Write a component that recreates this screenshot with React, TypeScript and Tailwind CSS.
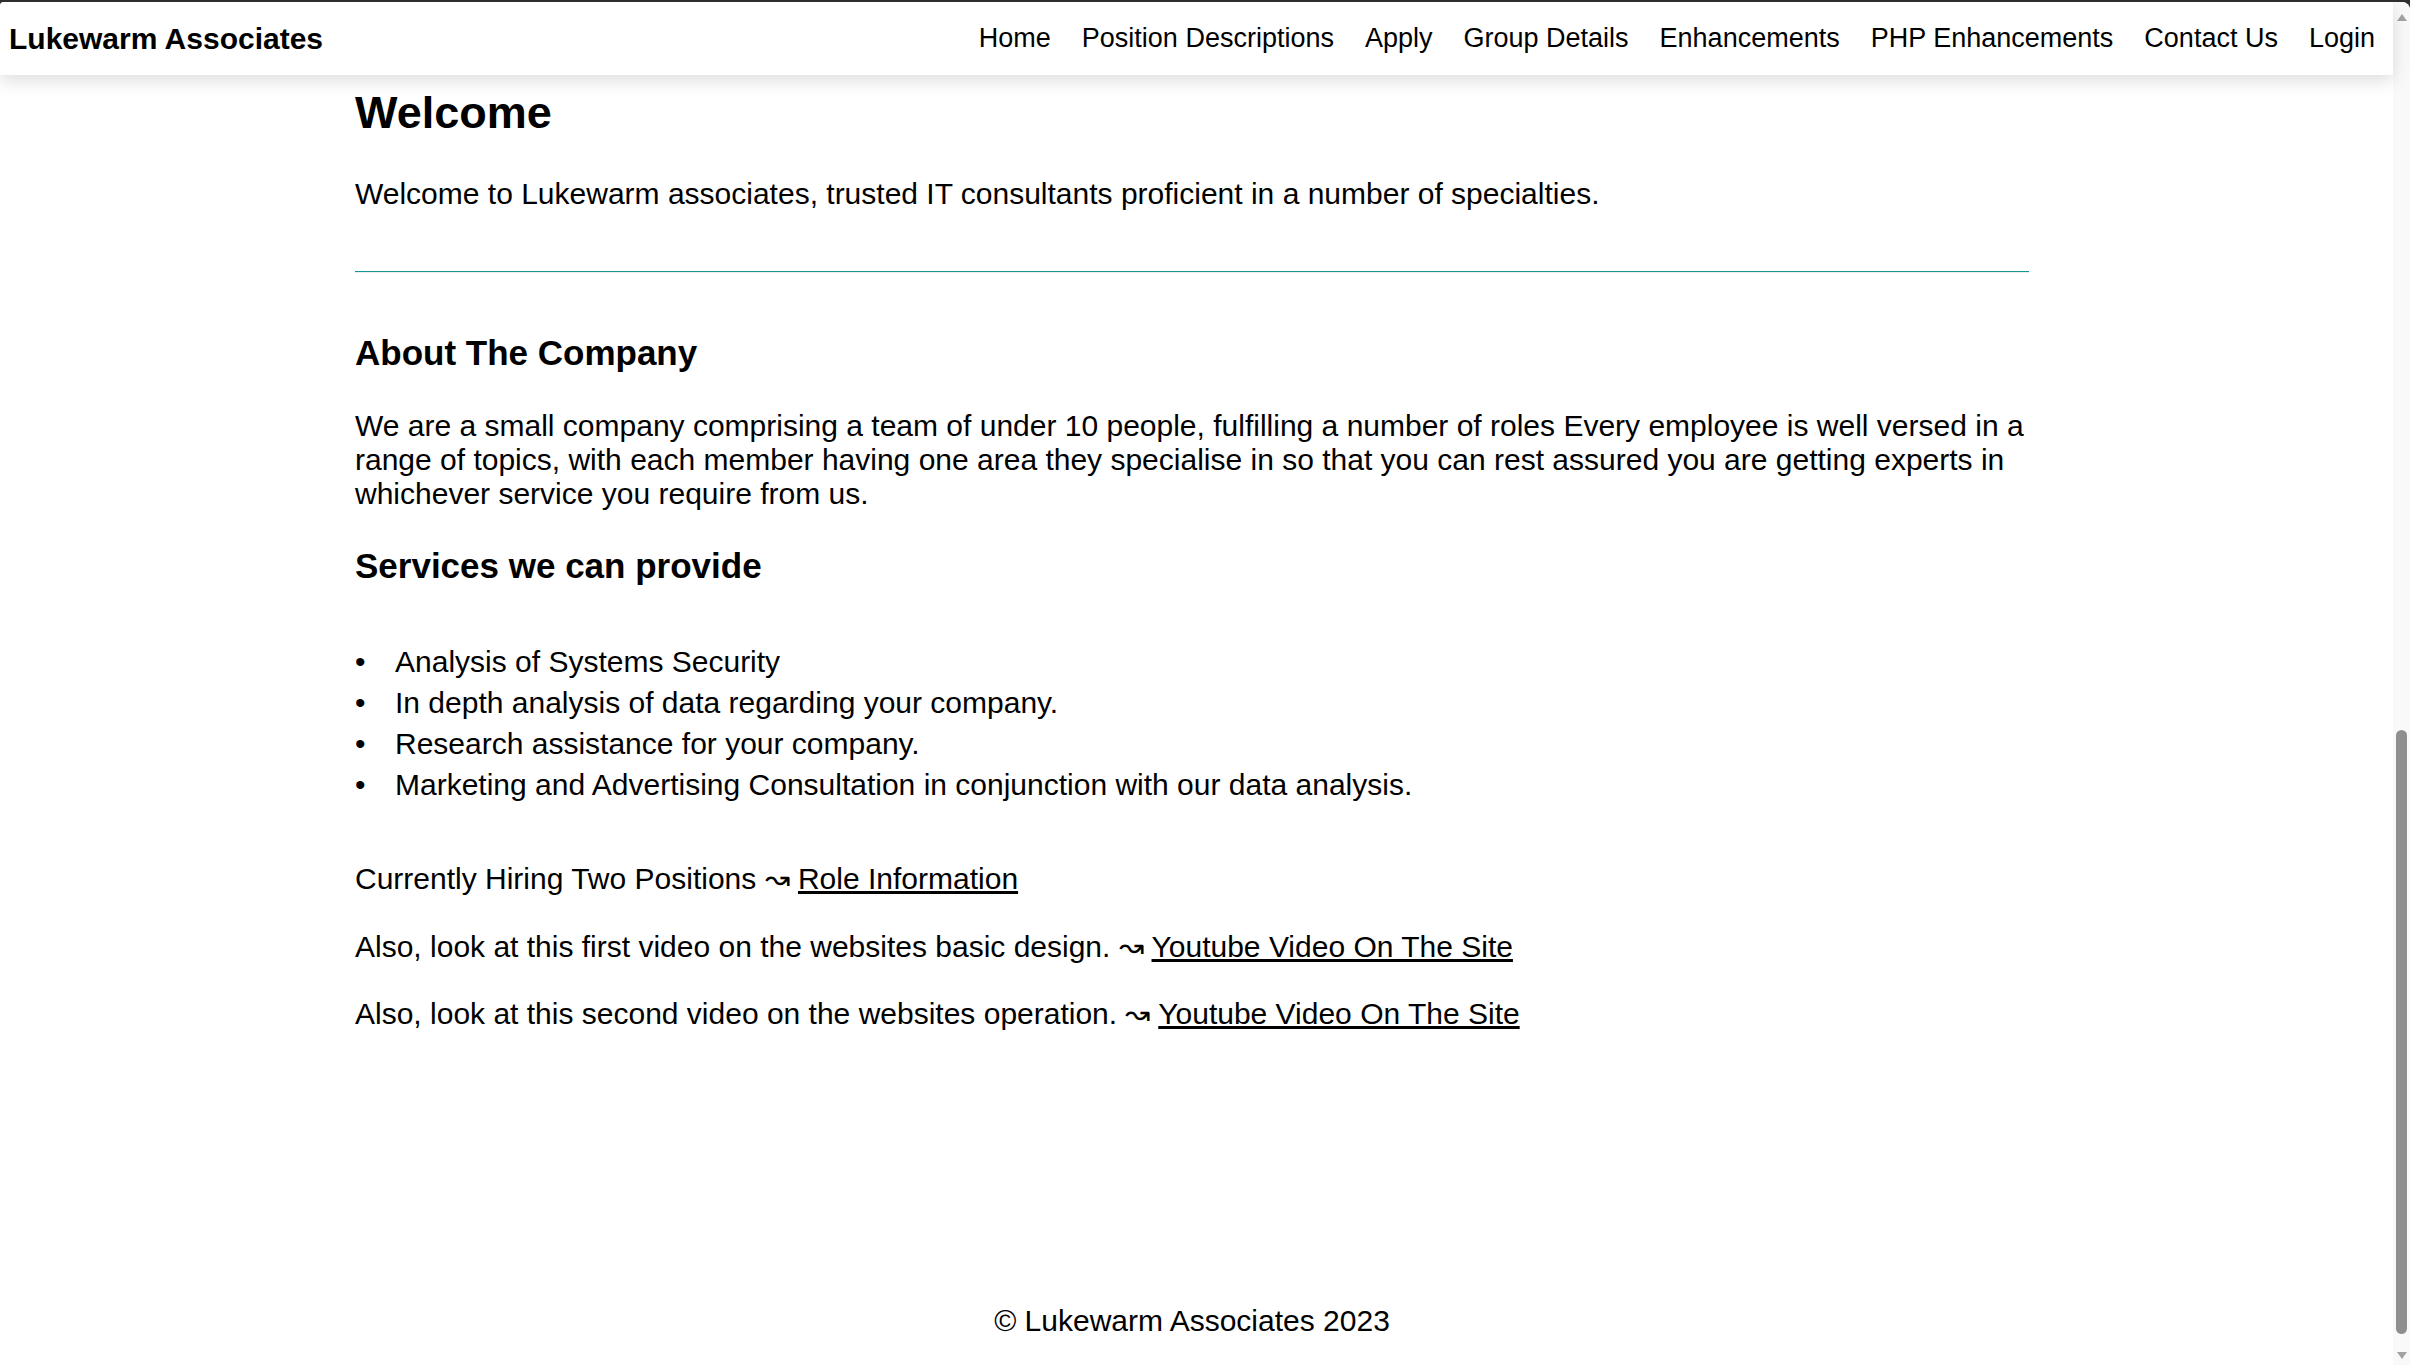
import React from "react";

const links = [
	"Home",
	"Position Descriptions",
	"Apply",
	"Group Details",
	"Enhancements",
	"PHP Enhancements",
	"Contact Us",
	"Login",
];

const services = [
	"Analysis of Systems Security",
	"In depth analysis of data regarding your company.",
	"Research assistance for your company.",
	"Marketing and Advertising Consultation in conjunction with our data analysis.",
];

const Scrollbar = () => {
	return (
		<div className="flex w-[17px] flex-col bg-[#f9f9f9]">
			<div className="flex h-[19px] items-end justify-center">
				<svg width="10" height="7" viewBox="0 0 10 7">
					<path d="M5 0 L10 7 L0 7 Z" fill="#a3a3a3" />
				</svg>
			</div>
			<div className="flex flex-1 flex-col justify-end">
				<div className="mx-auto h-[604px] w-[11px] rounded-full bg-[#8f8f8f]" />
			</div>
			<div className="flex h-[31px] items-end justify-center pb-[6px]">
				<svg width="10" height="7" viewBox="0 0 10 7">
					<path d="M0 0 L10 0 L5 7 Z" fill="#a3a3a3" />
				</svg>
			</div>
		</div>
	);
};

const App = () => {
	return (
		<div className="flex h-screen bg-[#2e2e2e] pt-[2px] font-['Liberation_Sans',Arial,sans-serif] leading-[normal] text-black">
			<div className="flex flex-1 overflow-hidden rounded-tl-[4px] rounded-tr-[8px] bg-white">
				<div className="flex flex-1 flex-col">
					<nav className="relative z-10 flex h-[73px] items-center justify-between bg-white pl-[9px] pr-[3px] shadow-[0_6px_16px_rgba(0,0,0,0.13)]">
						<span className="text-[30px] font-bold">Lukewarm Associates</span>
						<ul className="flex gap-[1px] text-[27px]">
							{links.map((link) => (
								<li key={link} className="px-[15px]">
									<a href="#">{link}</a>
								</li>
							))}
						</ul>
					</nav>

					<main className="flex flex-1 flex-col pr-[9px]">
						<div className="mx-auto w-[1674px]">
							<h1 className="mt-[12px] text-[45px] font-bold">Welcome</h1>
							<p className="mt-[38px] text-[30px]">
								Welcome to Lukewarm associates, trusted IT consultants proficient in a number of specialties.
							</p>
							<hr className="mt-[60px] border-0 border-t border-b border-t-[#129797] border-b-[#ececec]" />

							<h2 className="mt-[60px] text-[35px] font-bold">About The Company</h2>
							<p className="mt-[36px] text-[30px]">
								We are a small company comprising a team of under 10 people, fulfilling a number of roles Every
								employee is well versed in a range of topics, with each member having one area they specialise in
								so that you can rest assured you are getting experts in whichever service you require from us.
							</p>

							<h2 className="mt-[35px] text-[35px] font-bold">Services we can provide</h2>
							<ul className="mt-[55px] text-[30px] leading-[41px]">
								{services.map((s) => (
									<li key={s} className="flex">
										<span className="w-[40px] shrink-0">•</span>
										<span>{s}</span>
									</li>
								))}
							</ul>

							<p className="mt-[56px] text-[30px]">
								Currently Hiring Two Positions ↝{" "}
								<a href="#" className="underline">
									Role Information
								</a>
							</p>
							<p className="mt-[33px] text-[30px]">
								Also, look at this first video on the websites basic design. ↝{" "}
								<a href="#" className="underline">
									Youtube Video On The Site
								</a>
							</p>
							<p className="mt-[32px] text-[30px]">
								Also, look at this second video on the websites operation. ↝{" "}
								<a href="#" className="underline">
									Youtube Video On The Site
								</a>
							</p>
						</div>

						<footer className="mt-auto pb-[27px] text-center text-[30px]">© Lukewarm Associates 2023</footer>
					</main>
				</div>
				<Scrollbar />
			</div>
		</div>
	);
};

export default App;
